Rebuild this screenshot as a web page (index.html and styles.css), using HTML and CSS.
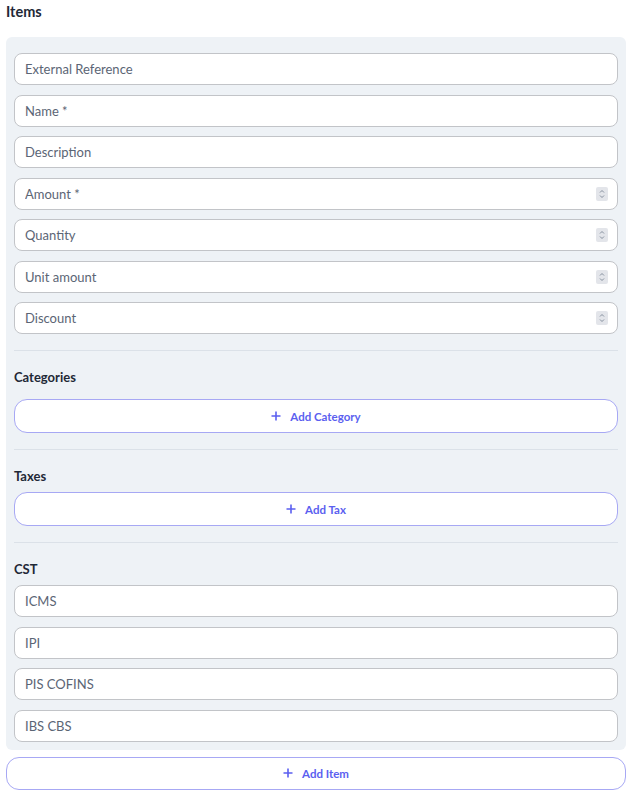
FILE: index.html
```html
<!DOCTYPE html>
<html>
<head>
<meta charset="utf-8">
<link rel="stylesheet" href="styles.css">
</head>
<body>
<div class="page">
  <h2 class="title">Items</h2>
  <div class="panel">
    <div class="fields">
      <label class="field"><input class="inp" type="text" placeholder="External Reference"></label>
      <label class="field"><input class="inp" type="text" placeholder="Name *"></label>
      <label class="field"><input class="inp" type="text" placeholder="Description"></label>
      <label class="field"><input class="inp" type="text" placeholder="Amount *"><span class="spin"><svg viewBox="0 0 10 14" width="10" height="14"><path d="M3 5.5 L5 3.5 L7 5.5 M3 8.5 L5 10.5 L7 8.5" fill="none" stroke="#7b8494" stroke-width="0.9"/></svg></span></label>
      <label class="field"><input class="inp" type="text" placeholder="Quantity"><span class="spin"><svg viewBox="0 0 10 14" width="10" height="14"><path d="M3 5.5 L5 3.5 L7 5.5 M3 8.5 L5 10.5 L7 8.5" fill="none" stroke="#7b8494" stroke-width="0.9"/></svg></span></label>
      <label class="field"><input class="inp" type="text" placeholder="Unit amount"><span class="spin"><svg viewBox="0 0 10 14" width="10" height="14"><path d="M3 5.5 L5 3.5 L7 5.5 M3 8.5 L5 10.5 L7 8.5" fill="none" stroke="#7b8494" stroke-width="0.9"/></svg></span></label>
      <label class="field"><input class="inp" type="text" placeholder="Discount"><span class="spin"><svg viewBox="0 0 10 14" width="10" height="14"><path d="M3 5.5 L5 3.5 L7 5.5 M3 8.5 L5 10.5 L7 8.5" fill="none" stroke="#7b8494" stroke-width="0.9"/></svg></span></label>
    </div>

    <div class="section">
      <div class="section-label section-label--wide">Categories</div>
      <button class="add-btn" type="button"><svg class="plus" viewBox="0 0 10 10" width="10" height="10"><path d="M5 0.5 V9.5 M0.5 5 H9.5" stroke="currentColor" stroke-width="1.6"/></svg>Add Category</button>
    </div>

    <div class="section">
      <div class="section-label">Taxes</div>
      <button class="add-btn" type="button"><svg class="plus" viewBox="0 0 10 10" width="10" height="10"><path d="M5 0.5 V9.5 M0.5 5 H9.5" stroke="currentColor" stroke-width="1.6"/></svg>Add Tax</button>
    </div>

    <div class="section">
      <div class="section-label">CST</div>
      <div class="fields">
        <label class="field"><input class="inp" type="text" placeholder="ICMS"></label>
        <label class="field"><input class="inp" type="text" placeholder="IPI"></label>
        <label class="field"><input class="inp" type="text" placeholder="PIS COFINS"></label>
        <label class="field"><input class="inp" type="text" placeholder="IBS CBS"></label>
      </div>
    </div>
  </div>
  <button class="add-btn add-btn--item" type="button"><svg class="plus" viewBox="0 0 10 10" width="10" height="10"><path d="M5 0.5 V9.5 M0.5 5 H9.5" stroke="currentColor" stroke-width="1.6"/></svg>Add Item</button>
</div>
</body>
</html>
```

FILE: styles.css
```css
* { box-sizing: border-box; }
html, body {
  margin: 0;
  padding: 0;
  background: #ffffff;
  font-family: Lato, "Open Sans", Arial, sans-serif;
}
.page {
  padding: 0 9px 0 6px;
}
.title {
  margin: 0;
  padding-top: 3px;
  height: 37px;
  font-size: 14.5px;
  line-height: 18px;
  font-weight: 700;
  color: #1f2937;
}
.panel {
  background: #eef2f6;
  border-radius: 6px;
  padding: 16px 8px 8px 8px;
}
.fields {
  display: flex;
  flex-direction: column;
  gap: 9.5px;
}
.field {
  display: flex;
  align-items: center;
  height: 32px;
  background: #ffffff;
  border: 1px solid #c2c4c8;
  border-radius: 8px;
  padding: 0 10px 0 10px;
}
.inp {
  flex: 1;
  min-width: 0;
  border: 0;
  outline: none;
  background: transparent;
  padding: 0;
  font-family: Lato, "Open Sans", Arial, sans-serif;
  font-size: 13px;
  color: #1f2937;
}
.inp::placeholder {
  color: #5b6575;
  opacity: 1;
}
.spin {
  display: flex;
  align-items: center;
  justify-content: center;
  width: 12px;
  height: 14px;
  background: #e3e5ea;
  border-radius: 2px;
  margin-right: -1px;
}
.section {
  border-top: 1px solid #dbe1e8;
  margin-top: 16px;
  padding-top: 16px;
}
.section-label {
  font-size: 13px;
  line-height: 20px;
  font-weight: 700;
  color: #1f2937;
  margin-bottom: 6px;
}
.section-label--wide {
  margin-bottom: 12px;
}
.add-btn {
  display: flex;
  align-items: center;
  justify-content: center;
  gap: 9px;
  width: 100%;
  height: 34px;
  background: #ffffff;
  border: 1px solid #a7a8f4;
  border-radius: 13px;
  color: #5b5ff0;
  font-family: Lato, "Open Sans", Arial, sans-serif;
  font-size: 11.5px;
  font-weight: 700;
  cursor: pointer;
  padding: 0;
}
.plus {
  display: block;
}
.add-btn--item {
  margin-top: 7px;
  height: 33px;
}
```
